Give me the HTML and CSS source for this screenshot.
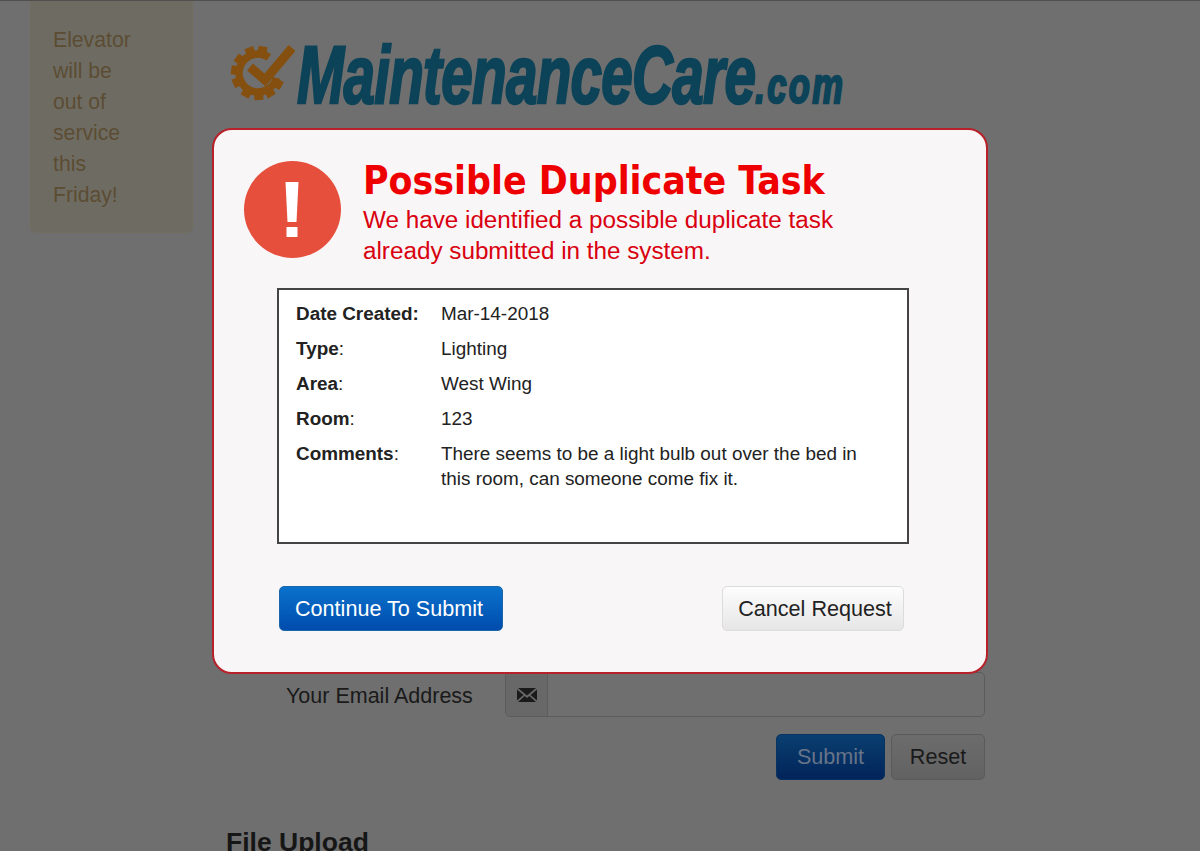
FILE: index.html
```html
<!DOCTYPE html>
<html lang="en">
<head>
    <meta charset="UTF-8">
    <meta name="viewport" content="width=device-width, initial-scale=1.0">
    <title>MaintenanceCare.com</title>
    <link rel="stylesheet" href="styles.css">
</head>
<body>
    <div class="page">
        <aside class="notice">Elevator will be out of service this Friday!</aside>

        <main class="content">
            <div class="logo">
                <svg class="logo-gear" viewBox="0 0 66 62" width="66" height="62" aria-hidden="true">
                    <g class="gear-teeth">
                        <line x1="47" y1="31" x2="56" y2="31" transform="rotate(29 29 31)"/>
                        <line x1="47" y1="31" x2="56" y2="31" transform="rotate(59 29 31)"/>
                        <line x1="47" y1="31" x2="56" y2="31" transform="rotate(88 29 31)"/>
                        <line x1="47" y1="31" x2="56" y2="31" transform="rotate(120 29 31)"/>
                        <line x1="47" y1="31" x2="56" y2="31" transform="rotate(156 29 31)"/>
                        <line x1="47" y1="31" x2="56" y2="31" transform="rotate(187 29 31)"/>
                        <line x1="47" y1="31" x2="56" y2="31" transform="rotate(216 29 31)"/>
                        <line x1="47" y1="31" x2="56" y2="31" transform="rotate(250 29 31)"/>
                        <line x1="47" y1="31" x2="56" y2="31" transform="rotate(281 29 31)"/>
                    </g>
                    <path class="gear-ring" d="M39.900 15.400A19 19 0 1 0 47.400 35.900"/>
                    <polyline class="gear-check" points="21,25 36,38 63,6"/>
                </svg>
                <span class="logo-name">MaintenanceCare<span class="logo-tld">.com</span></span>
            </div>

            <form class="task-form">
                <div class="form-row">
                    <label class="form-label" for="email">Your Email Address</label>
                    <div class="input-group">
                        <span class="input-addon">
                            <svg viewBox="0 0 20 16" width="20" height="16" aria-hidden="true">
                                <path d="M1 1h18L10 8.500z"/>
                                <path d="M0 2.500v11L6.500 8z"/>
                                <path d="M20 2.500v11L13.500 8z"/>
                                <path d="M1 15h18l-6.700-6L10 11 7.700 9z"/>
                            </svg>
                        </span>
                        <input class="input-field" id="email" type="text">
                    </div>
                </div>
                <div class="form-actions">
                    <button class="btn-submit" type="button">Submit</button>
                    <button class="btn-reset" type="button">Reset</button>
                </div>
                <h2 class="upload-title">File Upload</h2>
            </form>
        </main>
    </div>

    <div class="modal">
        <div class="modal-head">
            <svg class="alert-icon" viewBox="0 0 97 97" width="97" height="97" aria-hidden="true">
                <circle cx="48.500" cy="48.500" r="48.500" fill="#e74f3d"/>
                <path d="M41.500 21h13l-2 40h-9z" fill="#fff"/>
                <rect x="42.500" y="66" width="11" height="10" fill="#fff"/>
            </svg>
            <div class="modal-heading">
                <h1 class="modal-title">Possible Duplicate Task</h1>
                <p class="modal-text">We have identified a possible duplicate task already submitted in the system.</p>
            </div>
        </div>

        <div class="details">
            <div class="detail-label">Date Created:</div>
            <div class="detail-value">Mar-14-2018</div>
            <div class="detail-label">Type<span class="colon">:</span></div>
            <div class="detail-value">Lighting</div>
            <div class="detail-label">Area<span class="colon">:</span></div>
            <div class="detail-value">West Wing</div>
            <div class="detail-label">Room<span class="colon">:</span></div>
            <div class="detail-value">123</div>
            <div class="detail-label">Comments<span class="colon">:</span></div>
            <div class="detail-value comment">There seems to be a light bulb out over the bed in this room, can someone come fix it.</div>
        </div>

        <div class="modal-actions">
            <button class="btn-continue" type="button">Continue To Submit</button>
            <button class="btn-cancel" type="button">Cancel Request</button>
        </div>
    </div>
</body>
</html>
```

FILE: styles.css
```css
html, body {
    margin: 0;
    height: 851px;
    overflow: hidden;
}
body {
    font-family: "Liberation Sans", Arial, sans-serif;
    background-color: #6f6f6f;
    border-top: 1px solid #505050;
    box-sizing: border-box;
    color: #1a1a1a;
}
.page {
    display: flex;
    padding-left: 30px;
}
.notice {
    box-sizing: border-box;
    width: 163px;
    height: 232px;
    padding: 23px 55px 0 22px;
    background-color: #6e6c62;
    border: 1px solid #716e60;
    border-top: none;
    border-radius: 0 0 6px 6px;
    color: #5c4c34;
    font-size: 21.200px;
    line-height: 31px;
}
.content {
    width: 759px;
    margin-left: 33px;
}

/* logo */
.logo {
    display: flex;
    align-items: flex-start;
    height: 120px;
    padding-top: 41px;
}
.logo-gear {
    margin-left: 3px;
    flex-shrink: 0;
}
.gear-teeth line {
    stroke: #85500f;
    stroke-width: 9;
}
.gear-ring {
    fill: none;
    stroke: #85500f;
    stroke-width: 7.500;
}
.gear-check {
    fill: none;
    stroke: #85500f;
    stroke-width: 9;
}
.logo-name {
    margin: -3px 0 0 2px;
    font-size: 82px;
    font-weight: bold;
    font-style: italic;
    line-height: 72px;
    letter-spacing: -1px;
    color: #0c4358;
    -webkit-text-stroke: 2.500px #0c4358;
    white-space: nowrap;
    transform: scaleX(0.69);
    transform-origin: left center;
}
.logo-tld {
    font-size: 50px;
    letter-spacing: 3.500px;
}

/* form behind the modal */
.task-form {
    padding-top: 510px;
}
.form-row {
    display: flex;
    align-items: center;
}
.form-label {
    width: 279px;
    padding: 3px 0 0 60px;
    box-sizing: border-box;
    font-size: 21.500px;
}
.input-group {
    display: flex;
    width: 480px;
    height: 45px;
    box-sizing: border-box;
    border: 1px solid #5c5c5c;
    border-radius: 5px;
}
.input-addon {
    display: flex;
    align-items: center;
    justify-content: center;
    width: 41px;
    border-right: 1px solid #5c5c5c;
    background-color: #686868;
    border-radius: 5px 0 0 5px;
}
.input-addon path {
    fill: #1a1a1a;
}
.input-field {
    flex: 1;
    min-width: 0;
    border: none;
    background: transparent;
}
.form-actions {
    display: flex;
    justify-content: flex-end;
    gap: 6px;
    margin-top: 17px;
}
.btn-submit, .btn-reset {
    height: 46px;
    border-radius: 5px;
    font-family: inherit;
    font-size: 21.600px;
    padding: 0;
}
.btn-submit {
    width: 109px;
    background: linear-gradient(#0a3f70, #02245a);
    border: 1px solid #083360;
    color: #667488;
}
.btn-reset {
    width: 94px;
    background: linear-gradient(#6c6c6c, #626262);
    border: 1px solid #5a5a5a;
    color: #1a1a1a;
}
.upload-title {
    margin: 47px 0 0;
    font-size: 26.500px;
    line-height: 30px;
    color: #161616;
}

/* modal */
.modal {
    position: absolute;
    top: 128px;
    left: 212px;
    box-sizing: border-box;
    width: 776px;
    height: 546px;
    padding: 31px 29px 0 30px;
    background-color: #f8f6f7;
    border: 2px solid #b8202a;
    border-radius: 20px;
}
.modal-head {
    display: flex;
    gap: 22px;
}
.alert-icon {
    flex-shrink: 0;
}
.modal-title {
    margin: 0;
    font-family: "DejaVu Sans Condensed", "DejaVu Sans", sans-serif;
    font-size: 38.800px;
    font-weight: bold;
    line-height: 40px;
    color: #ee0000;
}
.modal-text {
    width: 490px;
    margin: 3px 0 0;
    font-size: 24.250px;
    line-height: 31px;
    color: #d9000f;
}
.details {
    display: grid;
    grid-template-columns: 145px 1fr;
    grid-auto-rows: min-content;
    row-gap: 10px;
    box-sizing: border-box;
    width: 632px;
    height: 256px;
    margin: 22px 0 0 33px;
    padding: 11px 40px 0 17px;
    background-color: #fff;
    border: 2px solid #444;
    font-size: 18.900px;
    line-height: 25px;
    color: #222;
}
.detail-label {
    font-weight: bold;
}
.colon {
    font-weight: normal;
}
.modal-actions {
    display: flex;
    justify-content: space-between;
    align-items: center;
    margin: 42px 53px 0 35px;
}
.btn-continue, .btn-cancel {
    box-sizing: border-box;
    height: 45px;
    border-radius: 5px;
    font-family: inherit;
    font-size: 21.600px;
}
.btn-continue {
    width: 224px;
    padding: 0 4px 0 0;
    background: linear-gradient(#0a72cc, #004cac);
    border: 1px solid #1a66a8;
    color: #fff;
}
.btn-cancel {
    width: 182px;
    padding: 0 0 0 4px;
    background: linear-gradient(#fdfdfd, #e6e6e6);
    border: 1px solid #dcdcdc;
    color: #222;
}
```
